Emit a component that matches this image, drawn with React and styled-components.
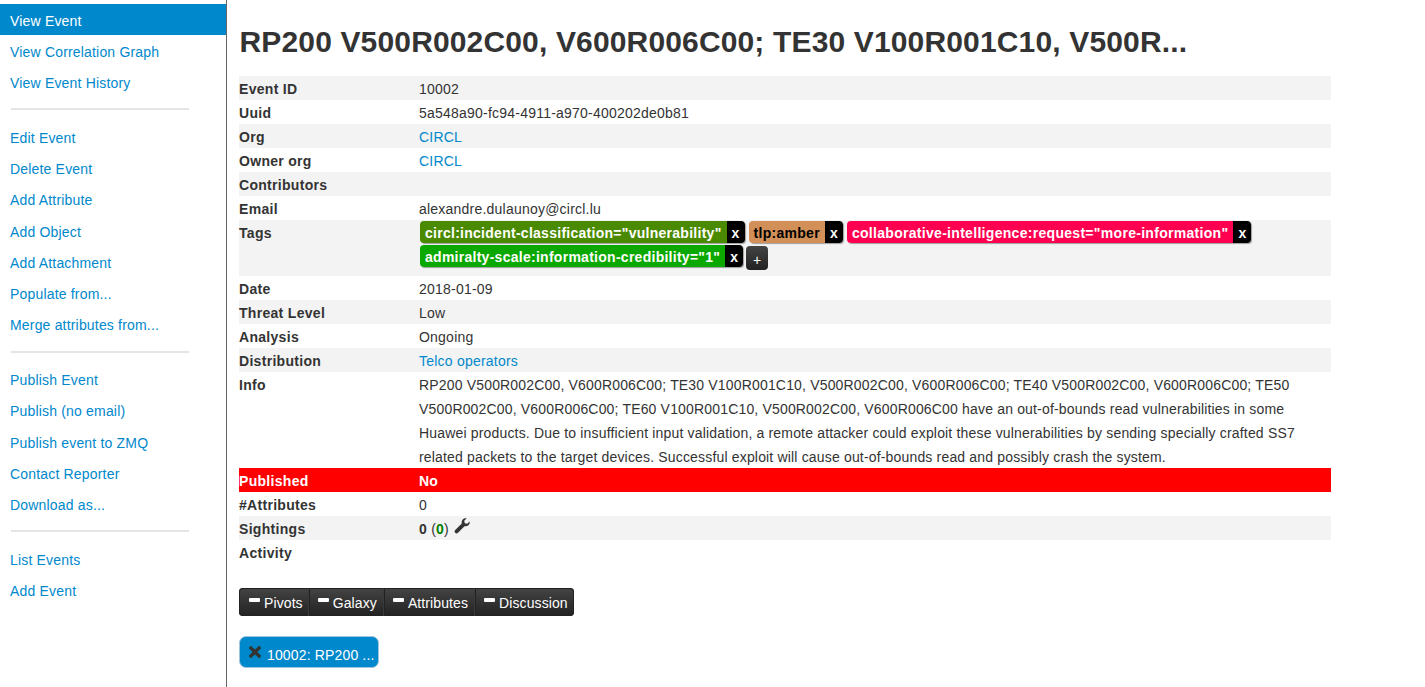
import React from "react";
import styled, { createGlobalStyle } from "styled-components";

const GlobalStyle = createGlobalStyle`
  html, body {
    margin: 0;
    padding: 0;
    background: #fff;
  }
  body {
    font-family: "Liberation Sans", Arial, sans-serif;
    font-size: 14px;
    line-height: 20px;
    color: #333;
  }
`;

const Page = styled.div`
  display: flex;
  height: 687px;
  overflow: hidden;
`;

const Sidebar = styled.nav`
  width: 226px;
  flex: none;
  padding-top: 4px;
  border-right: 1px solid #666;
`;

const NavItem = styled.a`
  display: block;
  box-sizing: border-box;
  height: 31.2px;
  padding: 0.78px 0 0 10px;
  line-height: 32px;
  letter-spacing: 0.18px;
  color: ${(p) => (p.$active ? "#fff" : "#0088cc")};
  background: ${(p) => (p.$active ? "#0088cc" : "transparent")};
`;

const NavDivider = styled.div`
  height: 2px;
  width: 178px;
  margin: 10.875px 0 10.875px 11px;
  background: #e5e5e5;
`;

const Main = styled.main`
  flex: 1;
  padding-left: 12px;
  min-width: 0;
`;

const Title = styled.h2`
  margin: 0;
  padding: 22px 0 0 0.5px;
  height: 54px;
  font-size: 30px;
  line-height: 40px;
  font-weight: bold;
  letter-spacing: 0.15px;
  color: #333;
  white-space: nowrap;
`;

const MetaTable = styled.div`
  width: 1092px;
`;

const MetaRow = styled.div`
  display: grid;
  grid-template-columns: 180px 1fr;
  padding-top: 1px;
  line-height: 24px;
  min-height: 24px;
  box-sizing: border-box;
  letter-spacing: 0.22px;
  background: ${(p) => (p.$alert ? "#ff0000" : p.$striped ? "#f3f3f3" : "#fff")};
  color: ${(p) => (p.$alert ? "#fff" : "#333")};
  font-weight: ${(p) => (p.$alert ? "bold" : "normal")};
`;

const MetaKey = styled.div`
  margin-bottom: -1px;
  font-weight: bold;
  letter-spacing: 0.3px;
`;

const MetaValue = styled.div`
  margin-bottom: -1px;
  padding-right: 20px;
`;

const InfoText = styled(MetaValue)`
  letter-spacing: 0.17px;
`;

const TextLink = styled.a`
  color: #0088cc;
`;

const TagList = styled.div`
  display: flex;
  flex-wrap: wrap;
  align-content: flex-start;
  height: 55px;
  padding-left: 1px;
  box-sizing: border-box;
`;

const TagGroup = styled.span`
  display: inline-flex;
  height: 22px;
  margin: 0 4px 2px 0;
  border-radius: 4px;
  overflow: hidden;
  font-weight: bold;
  line-height: 24px;
  box-shadow: 1px 1px 1px rgba(0, 0, 0, 0.35);
`;

const TagName = styled.span`
  padding: 0 5px;
  letter-spacing: ${(p) => p.$spacing}px;
  color: ${(p) => p.$fg};
  background: ${(p) => p.$bg};
`;

const TagRemove = styled.span`
  width: 18px;
  text-align: center;
  color: #fff;
  background: #000;
`;

const AddTag = styled.span`
  display: inline-block;
  width: 22px;
  height: 24px;
  margin: 1px 0 0 -1px;
  border-radius: 4px;
  color: #fff;
  background: linear-gradient(#444, #222);
  text-align: center;
  font-size: 14px;
  line-height: 28px;
`;

const Sighting = styled.span`
  display: inline-flex;
  align-items: center;
  gap: 5px;
`;

const Green = styled.b`
  color: #008000;
`;

const TabBar = styled.div`
  display: inline-flex;
  margin-top: 24px;
  height: 28px;
  border-radius: 4px;
  overflow: hidden;
  background: linear-gradient(#444, #222);
  box-shadow: inset 0 0 0 1px #222;
`;

const Tab = styled.div`
  display: flex;
  align-items: center;
  gap: 4px;
  padding: 2px 7px 0 10px;
  letter-spacing: 0.1px;
  color: #fff;
  border-right: 1px solid #222;
  box-shadow: inset -1px 0 0 #3a3a3a;

  & + & {
    padding-left: 8px;
  }

  &:first-child {
    padding-right: 6px;
  }

  &:last-child {
    padding-right: 6px;
    border-right: 0;
    box-shadow: none;
  }
`;

const Minus = styled.span`
  display: block;
  width: 11px;
  height: 4px;
  margin-top: -6px;
  background: #fff;
  border-radius: 1px;
`;

const EventPillRow = styled.div`
  margin-top: 20px;
`;

const EventPill = styled.div`
  display: inline-flex;
  align-items: center;
  gap: 5px;
  width: 140px;
  height: 32px;
  box-sizing: border-box;
  padding-left: 8px;
  border: 1px solid #9cc6dd;
  border-radius: 7px;
  background: #0088cc;
  color: #fff;
  letter-spacing: 0.15px;
`;

const PillLabel = styled.span`
  padding-top: 6px;
`;

const WrenchSvg = styled.svg`
  margin-top: -6px;
`;

const CloseSvg = styled.svg`
  margin-top: -1px;
`;

const Wrench = () => (
  <WrenchSvg width="16" height="16" viewBox="0 0 16 16">
    <path
      fill="#333"
      d="M15.6 3.4c.3 1.400-.1 2.900-1.200 3.900-1.100 1-2.600 1.300-3.900.9L4 14.800c-.8.8-2 .8-2.800 0-.8-.8-.8-2 0-2.800l6.600-6.500C7.400 4.200 7.700 2.700 8.700 1.600 9.700.5 11.200.1 12.600.4L10.200 2.800l.6 2.400 2.400.6z"
    />
  </WrenchSvg>
);

const CloseIcon = () => (
  <CloseSvg width="14" height="14" viewBox="0 0 14 14">
    <path
      fill="#333"
      d="M2.800.8 7 4.500 11.200.8l2.200 2.200L9.500 7l3.900 4-2.200 2.200L7 9.500l-4.200 3.700L.6 11l3.900-4L.6 3z"
    />
  </CloseSvg>
);

const topLinks = ["View Event", "View Correlation Graph", "View Event History"];
const editLinks = [
  "Edit Event",
  "Delete Event",
  "Add Attribute",
  "Add Object",
  "Add Attachment",
  "Populate from...",
  "Merge attributes from...",
];
const publishLinks = [
  "Publish Event",
  "Publish (no email)",
  "Publish event to ZMQ",
  "Contact Reporter",
  "Download as...",
];
const listLinks = ["List Events", "Add Event"];

const tags = [
  { name: 'circl:incident-classification="vulnerability"', bg: "#4a8a00", fg: "#fff", spacing: 0.27 },
  { name: "tlp:amber", bg: "#d28f57", fg: "#000", spacing: 0.28 },
  { name: 'collaborative-intelligence:request="more-information"', bg: "#ff0050", fg: "#fff", spacing: 0.3 },
  { name: 'admiralty-scale:information-credibility="1"', bg: "#0aa800", fg: "#fff", spacing: 0.27 },
];

const tabs = ["Pivots", "Galaxy", "Attributes", "Discussion"];

export default function App() {
  return (
    <Page>
      <GlobalStyle />
      <Sidebar>
        {topLinks.map((l, i) => (
          <NavItem key={l} $active={i === 0}>{l}</NavItem>
        ))}
        <NavDivider />
        {editLinks.map((l) => (
          <NavItem key={l}>{l}</NavItem>
        ))}
        <NavDivider />
        {publishLinks.map((l) => (
          <NavItem key={l}>{l}</NavItem>
        ))}
        <NavDivider />
        {listLinks.map((l) => (
          <NavItem key={l}>{l}</NavItem>
        ))}
      </Sidebar>
      <Main>
        <Title>RP200 V500R002C00, V600R006C00; TE30 V100R001C10, V500R...</Title>
        <MetaTable>
          <MetaRow $striped>
            <MetaKey>Event ID</MetaKey>
            <MetaValue>10002</MetaValue>
          </MetaRow>
          <MetaRow>
            <MetaKey>Uuid</MetaKey>
            <MetaValue>5a548a90-fc94-4911-a970-400202de0b81</MetaValue>
          </MetaRow>
          <MetaRow $striped>
            <MetaKey>Org</MetaKey>
            <MetaValue><TextLink>CIRCL</TextLink></MetaValue>
          </MetaRow>
          <MetaRow>
            <MetaKey>Owner org</MetaKey>
            <MetaValue><TextLink>CIRCL</TextLink></MetaValue>
          </MetaRow>
          <MetaRow $striped>
            <MetaKey>Contributors</MetaKey>
            <MetaValue />
          </MetaRow>
          <MetaRow>
            <MetaKey>Email</MetaKey>
            <MetaValue>alexandre.dulaunoy@circl.lu</MetaValue>
          </MetaRow>
          <MetaRow $striped>
            <MetaKey>Tags</MetaKey>
            <TagList>
              {tags.map((t) => (
                <TagGroup key={t.name}>
                  <TagName $bg={t.bg} $fg={t.fg} $spacing={t.spacing}>{t.name}</TagName>
                  <TagRemove>x</TagRemove>
                </TagGroup>
              ))}
              <AddTag>+</AddTag>
            </TagList>
          </MetaRow>
          <MetaRow>
            <MetaKey>Date</MetaKey>
            <MetaValue>2018-01-09</MetaValue>
          </MetaRow>
          <MetaRow $striped>
            <MetaKey>Threat Level</MetaKey>
            <MetaValue>Low</MetaValue>
          </MetaRow>
          <MetaRow>
            <MetaKey>Analysis</MetaKey>
            <MetaValue>Ongoing</MetaValue>
          </MetaRow>
          <MetaRow $striped>
            <MetaKey>Distribution</MetaKey>
            <MetaValue><TextLink>Telco operators</TextLink></MetaValue>
          </MetaRow>
          <MetaRow>
            <MetaKey>Info</MetaKey>
            <InfoText>
              RP200 V500R002C00, V600R006C00; TE30 V100R001C10, V500R002C00, V600R006C00; TE40 V500R002C00, V600R006C00; TE50 V500R002C00, V600R006C00; TE60 V100R001C10, V500R002C00, V600R006C00 have an out-of-bounds read vulnerabilities in some Huawei products. Due to insufficient input validation, a remote attacker could exploit these vulnerabilities by sending specially crafted SS7 related packets to the target devices. Successful exploit will cause out-of-bounds read and possibly crash the system.
            </InfoText>
          </MetaRow>
          <MetaRow $alert>
            <MetaKey>Published</MetaKey>
            <MetaValue>No</MetaValue>
          </MetaRow>
          <MetaRow>
            <MetaKey>#Attributes</MetaKey>
            <MetaValue>0</MetaValue>
          </MetaRow>
          <MetaRow $striped>
            <MetaKey>Sightings</MetaKey>
            <MetaValue>
              <Sighting>
                <span><b>0</b> (<Green>0</Green>)</span>
                <Wrench />
              </Sighting>
            </MetaValue>
          </MetaRow>
          <MetaRow>
            <MetaKey>Activity</MetaKey>
            <MetaValue />
          </MetaRow>
        </MetaTable>
        <TabBar>
          {tabs.map((t) => (
            <Tab key={t}>
              <Minus />
              {t}
            </Tab>
          ))}
        </TabBar>
        <EventPillRow>
          <EventPill>
            <CloseIcon />
            <PillLabel>10002: RP200 ...</PillLabel>
          </EventPill>
        </EventPillRow>
      </Main>
    </Page>
  );
}
